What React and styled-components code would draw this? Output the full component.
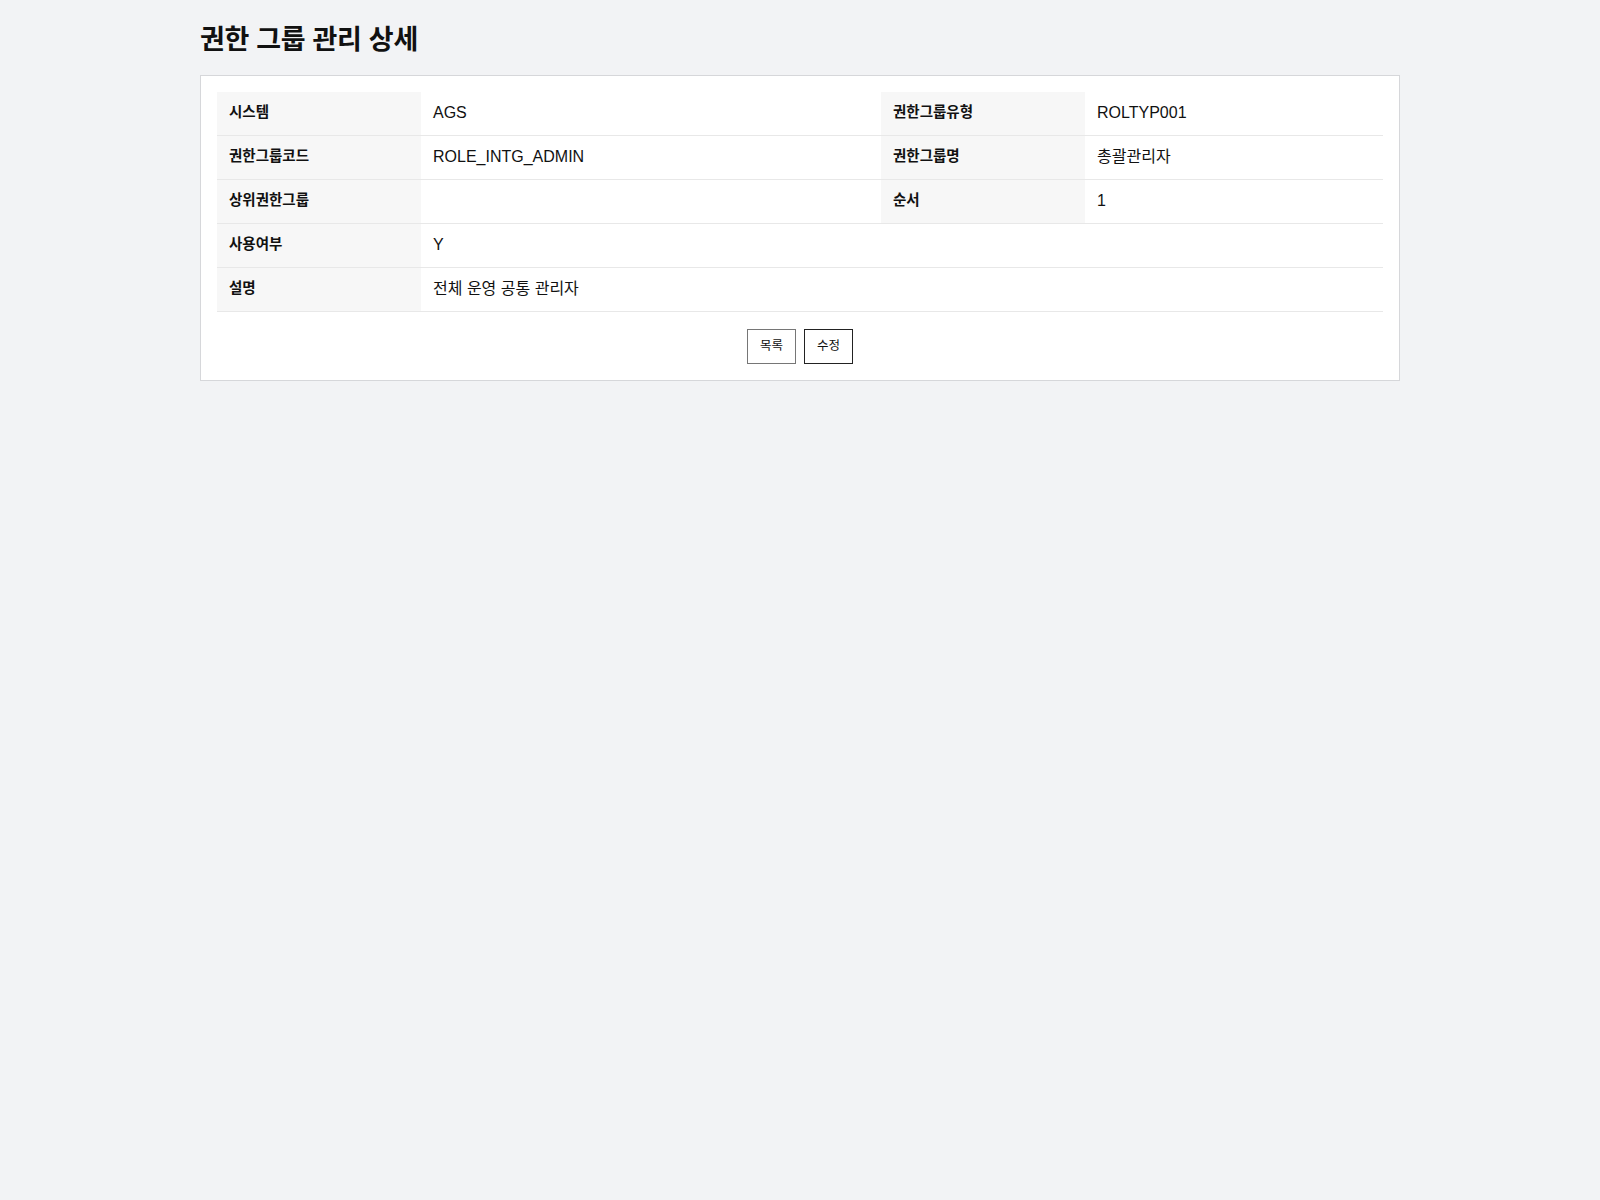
import React from 'react'
import styled, { createGlobalStyle } from 'styled-components';

const GlobalStyle = createGlobalStyle`
    html, body {
        margin: 0;
        padding: 0;
        background: #f2f3f5;
    }
    body {
        font-family: "Liberation Sans", "Noto Sans CJK KR", sans-serif;
        color: #111;
        min-height: 1200px;
    }
`;

const rows = [
    [['시스템', 'AGS'], ['권한그룹유형', 'ROLTYP001']],
    [['권한그룹코드', 'ROLE_INTG_ADMIN'], ['권한그룹명', '총괄관리자']],
    [['상위권한그룹', ''], ['순서', '1']],
    [['사용여부', 'Y']],
    [['설명', '전체 운영 공통 관리자']],
];

const App = () => (
    <Page>
        <GlobalStyle />
        <Title>권한 그룹 관리 상세</Title>
        <Card>
            <DetailTable>
                <colgroup>
                    <col style={{ width: 204 }} />
                    <col style={{ width: 460 }} />
                    <col style={{ width: 204 }} />
                    <col />
                </colgroup>
                <tbody>
                    {rows.map((row, i) => (
                        <tr key={i}>
                            {row.map(([label, value]) => (
                                <React.Fragment key={label}>
                                    <Label>{label}</Label>
                                    <Value colSpan={row.length === 1 ? 3 : 1}>{value}</Value>
                                </React.Fragment>
                            ))}
                        </tr>
                    ))}
                </tbody>
            </DetailTable>
            <ButtonRow>
                <Button>목록</Button>
                <Button primary>수정</Button>
            </ButtonRow>
        </Card>
    </Page>
)

const Page = styled.div`
    width: 1200px;
    margin: 0 auto;
    padding-top: 22px;
`;

const Title = styled.h1`
    margin: 0 0 17px;
    font-size: 27px;
    line-height: 36px;
    font-weight: 700;
    letter-spacing: -0.3px;
`;

const Card = styled.div`
    background: #fff;
    border: 1px solid #d6d7da;
    padding: 16px;
`;

const DetailTable = styled.table`
    width: 100%;
    table-layout: fixed;
    border-collapse: collapse;
`;

const Label = styled.th`
    background: #f7f7f7;
    border-bottom: 1px solid #e8e8e8;
    padding: 11px 12px 13px;
    font-size: 14.5px;
    line-height: 19px;
    font-weight: 700;
    text-align: left;
`;

const Value = styled.td`
    border-bottom: 1px solid #e8e8e8;
    padding: 11px 12px 13px;
    font-size: 16px;
    line-height: 19px;
    text-align: left;
`;

const ButtonRow = styled.div`
    display: flex;
    justify-content: center;
    gap: 8px;
    margin-top: 17px;
`;

const Button = styled.button`
    background: #fff;
    border: 1px solid ${props => (props.primary ? '#222' : '#767676')};
    padding: 8px 12px;
    font-family: "Liberation Sans", "Noto Sans CJK KR", sans-serif;
    font-size: 12.5px;
    line-height: 17px;
    color: #111;
    cursor: pointer;
`;

export default App;
